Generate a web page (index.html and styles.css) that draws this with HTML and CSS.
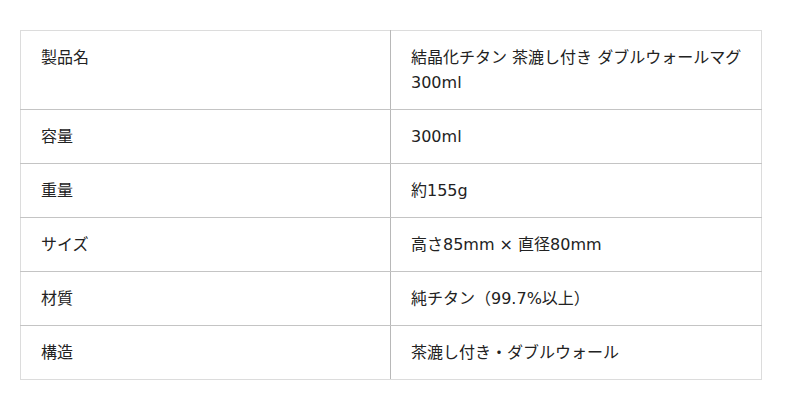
FILE: index.html
```html
<!DOCTYPE html>
<html lang="ja">
<head>
<meta charset="utf-8">
<link rel="stylesheet" href="styles.css">
</head>
<body>
<table class="spec">
  <tr><th>製品名</th><td>結晶化チタン 茶漉し付き ダブルウォールマグ 300ml</td></tr>
  <tr><th>容量</th><td>300ml</td></tr>
  <tr><th>重量</th><td>約155g</td></tr>
  <tr><th>サイズ</th><td>高さ85mm × 直径80mm</td></tr>
  <tr><th>材質</th><td>純チタン（99.7%以上）</td></tr>
  <tr><th>構造</th><td>茶漉し付き・ダブルウォール</td></tr>
</table>
</body>
</html>
```
FILE: styles.css
```css
html, body {
  margin: 0;
  padding: 0;
  background: #fff;
}
body {
  padding: 30px 20px;
  font-family: "DejaVu Sans", "Noto Sans CJK JP", sans-serif;
  font-size: 16px;
  line-height: 25px;
  color: #222;
}
.spec {
  width: 742px;
  border-collapse: collapse;
  border: 1px solid #dcdcdc;
  table-layout: fixed;
}
.spec th, .spec td {
  text-align: left;
  font-weight: normal;
  vertical-align: top;
  padding: 14px 20px 14px;
  border-bottom: 1px solid #c4c4c4;
}
.spec td {
  padding-right: 14px;
}
.spec tr:last-child th, .spec tr:last-child td {
  border-bottom: 1px solid #dcdcdc;
}
.spec th {
  width: 329px;
  border-right: 1px solid #b8b8b8;
}
```
